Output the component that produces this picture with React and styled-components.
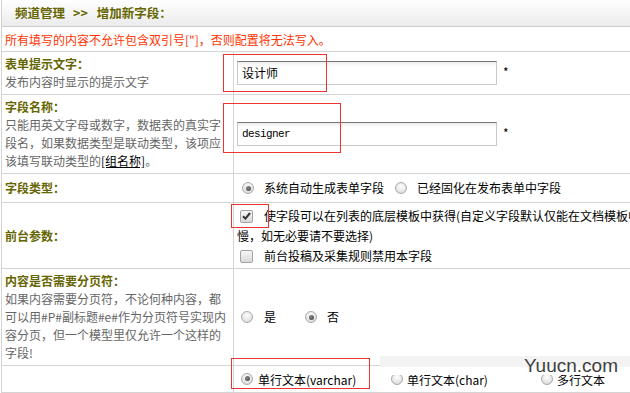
import React from "react";
import styled, { createGlobalStyle, css } from "styled-components";

const Global = createGlobalStyle`
  html, body { margin: 0; padding: 0; background: #fff; overflow: hidden; }
  body {
    font-family: "Noto Sans CJK SC", "Noto Sans", sans-serif;
    font-size: 12px;
    color: #000;
  }
`;

const Page = styled.div`
  position: relative;
  width: 630px;
  height: 393px;
  overflow: hidden;
`;

const Table = styled.div`
  margin-left: 1px;
  border-left: 1px solid #d4d4d4;
  width: 1000px;
`;

const HeaderBar = styled.div`
  height: 27px;
  box-sizing: border-box;
  display: flex;
  align-items: center;
  padding-left: 13px;
  background: linear-gradient(#ffffff, #ebebeb);
  border-bottom: 1px solid #cbcbcb;
  font-weight: bold;
  font-size: 12.5px;
  color: #666600;
  line-height: 18px;
`;

const Crumb = styled.span`
  margin: 0 9px 0 8px;
`;

const Notice = styled.div`
  height: 24px;
  display: flex;
  align-items: center;
  padding-left: 3px;
  color: #ff3300;
  border-bottom: 1px solid #d4d4d4;
`;

const Row = styled.div`
  display: flex;
  border-bottom: 1px solid #d4d4d4;
  ${(p) => p.$h && css`height: ${p.$h}px;`}
`;

const LabelCell = styled.div`
  width: 232px;
  flex: none;
  box-sizing: border-box;
  border-right: 1px solid #d4d4d4;
  padding: 3px 3px;
  display: flex;
  flex-direction: column;
  justify-content: ${(p) => (p.$top ? "flex-start" : "center")};
  line-height: 18px;
  white-space: nowrap;
`;

const Title = styled.div`
  font-weight: bold;
  color: #666600;
`;

const Desc = styled.div`
  color: #666;
`;

const GroupLink = styled.span`
  color: #000;
  text-decoration: underline;
`;

const ValueCell = styled.div`
  flex: 1;
  padding: ${(p) => p.$pad || "3px 3px"};
  display: flex;
  flex-direction: ${(p) => (p.$col ? "column" : "row")};
  align-items: ${(p) => (p.$col ? "flex-start" : "center")};
  line-height: 18px;
  white-space: nowrap;
`;

const TextInput = styled.div`
  width: 260px;
  height: 24px;
  box-sizing: border-box;
  border: 1px solid #c8c8c8;
  border-top-color: #777;
  background: linear-gradient(#ececec 0, #fafafa 3px, #fff 6px);
  display: flex;
  align-items: center;
  padding-left: 4px;
  font-family: ${(p) =>
    p.$mono ? '"Liberation Mono", monospace' : '"Noto Sans CJK SC", sans-serif'};
  font-size: ${(p) => (p.$mono ? "11px" : "12px")};
  letter-spacing: ${(p) => (p.$mono ? "-0.6px" : "0")};
`;

const Required = styled.span`
  margin-left: 6px;
  margin-top: -3px;
  font-size: 12px;
`;

const Option = styled.label`
  display: inline-flex;
  align-items: center;
  flex: none;
  margin-left: ${(p) => p.$ml || 0}px;
  gap: ${(p) => p.$gap || 10}px;
  ${(p) => p.$w && css`width: ${p.$w}px;`}
`;

const Radio = styled.span`
  display: inline-block;
  position: relative;
  width: 12px;
  height: 12px;
  box-sizing: border-box;
  border-radius: 50%;
  border: 1px solid #aaaaaa;
  background: radial-gradient(circle at 50% 35%, #fdfdfd 0%, #e8e8e8 55%, #cfcfcf 100%);
  flex: none;
  margin-top: ${(p) => p.$mt || 0}px;
  ${(p) =>
    p.$checked &&
    css`
      &::after {
        content: "";
        position: absolute;
        left: 2.5px;
        top: 2.5px;
        width: 5px;
        height: 5px;
        border-radius: 50%;
        background: radial-gradient(circle at 40% 35%, #888, #3c3c3c);
      }
    `}
`;

const Check = styled.span`
  display: inline-flex;
  align-items: center;
  justify-content: center;
  width: 13px;
  height: 13px;
  box-sizing: border-box;
  border-radius: 2px;
  border: 1px solid #a3a3a3;
  background: linear-gradient(#f6f6f6, #d9d9d9);
  flex: none;
`;

const CheckLine = styled.div`
  height: 20px;
  display: flex;
  align-items: center;
  padding-left: ${(p) => p.$pl || 0}px;
`;

const Annotation = styled.div`
  position: absolute;
  left: ${(p) => p.$x}px;
  top: ${(p) => p.$y}px;
  width: ${(p) => p.$w}px;
  height: ${(p) => p.$h}px;
  box-sizing: border-box;
  border: 1px solid #ee3333;
  pointer-events: none;
`;

const Watermark = styled.div`
  position: absolute;
  left: 380px;
  top: 356px;
  width: 250px;
  height: 19px;
  background: linear-gradient(#f3f3f3 0, #f3f3f3 11px, #ffffff 11px);
  display: flex;
  align-items: center;
  justify-content: flex-end;
  padding-right: 12px;
  box-sizing: border-box;
  font-family: "Liberation Sans", Arial, sans-serif;
  font-size: 19px;
  color: #3f3f3f;
  line-height: 19px;
`;

const Mark = () => (
  <svg width="9" height="8" viewBox="0 0 9 8">
    <path d="M1 4.2 L3.4 6.6 L8 1" fill="none" stroke="#333" strokeWidth="2" />
  </svg>
);

export default function App() {
  return (
    <Page>
      <Global />
      <Table>
        <HeaderBar>
          频道管理<Crumb>&gt;&gt;</Crumb>增加新字段：
        </HeaderBar>
        <Notice>所有填写的内容不允许包含双引号["]，否则配置将无法写入。</Notice>

        <Row>
          <LabelCell>
            <Title>表单提示文字：</Title>
            <Desc>发布内容时显示的提示文字</Desc>
          </LabelCell>
          <ValueCell>
            <TextInput>设计师</TextInput>
            <Required>*</Required>
          </ValueCell>
        </Row>

        <Row>
          <LabelCell>
            <Title>字段名称：</Title>
            <Desc>只能用英文字母或数字，数据表的真实字</Desc>
            <Desc>段名，如果数据类型是联动类型，该项应</Desc>
            <Desc>
              该填写联动类型的<GroupLink>[组名称]</GroupLink>。
            </Desc>
          </LabelCell>
          <ValueCell>
            <TextInput $mono>designer</TextInput>
            <Required>*</Required>
          </ValueCell>
        </Row>

        <Row $h={28}>
          <LabelCell>
            <Title>字段类型：</Title>
          </LabelCell>
          <ValueCell>
            <Option $ml={5} $w={153}>
              <Radio $checked />
              系统自动生成表单字段
            </Option>
            <Option>
              <Radio />
              已经固化在发布表单中字段
            </Option>
          </ValueCell>
        </Row>

        <Row $h={65}>
          <LabelCell>
            <Title>前台参数：</Title>
          </LabelCell>
          <ValueCell $col $pad="3px 3px 2px 3px">
            <CheckLine $pl={3}>
              <Option $gap={11}>
                <Check>
                  <Mark />
                </Check>
                使字段可以在列表的底层模板中获得(自定义字段默认仅能在文档模板中获得，启用此项将使系统性能变
              </Option>
            </CheckLine>
            <CheckLine>慢，如无必要请不要选择)</CheckLine>
            <CheckLine $pl={3}>
              <Option $gap={11}>
                <Check />
                前台投稿及采集规则禁用本字段
              </Option>
            </CheckLine>
          </ValueCell>
        </Row>

        <Row>
          <LabelCell $top>
            <Title>内容是否需要分页符：</Title>
            <Desc>如果内容需要分页符，不论何种内容，都</Desc>
            <Desc>可以用#P#副标题#e#作为分页符号实现内</Desc>
            <Desc>容分页，但一个模型里仅允许一个这样的</Desc>
            <Desc>字段!</Desc>
          </LabelCell>
          <ValueCell>
            <Option $ml={4} $w={64} $gap={11}>
              <Radio />
              是
            </Option>
            <Option $gap={10}>
              <Radio $checked />
              否
            </Option>
          </ValueCell>
        </Row>

        <Row>
          <LabelCell />
          <ValueCell $pad="5px 3px 3px">
            <Option $ml={4} $w={150} $gap={5}>
              <Radio $checked $mt={-3} />
              单行文本(varchar)
            </Option>
            <Option $w={150} $gap={4}>
              <Radio $mt={-3} />
              单行文本(char)
            </Option>
            <Option $gap={4}>
              <Radio $mt={-3} />
              多行文本
            </Option>
          </ValueCell>
        </Row>
      </Table>

      <Annotation $x={223} $y={54} $w={104} $h={38} />
      <Annotation $x={223} $y={103} $w={118} $h={50} />
      <Annotation $x={231} $y={204} $w={38} $h={24} />
      <Annotation $x={231} $y={358} $w={139} $h={31} />
      <Watermark>Yuucn.com</Watermark>
    </Page>
  );
}
